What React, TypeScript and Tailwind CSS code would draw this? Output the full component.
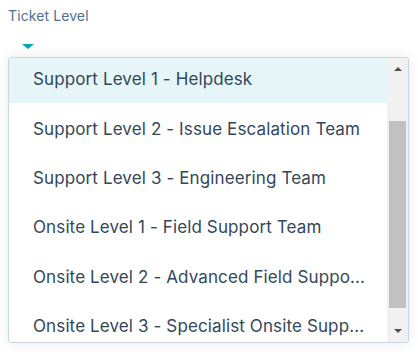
const levels = [
    'Support Level 1 - Helpdesk',
    'Support Level 2 - Issue Escalation Team',
    'Support Level 3 - Engineering Team',
    'Onsite Level 1 - Field Support Team',
    'Onsite Level 2 - Advanced Field Suppo...',
    'Onsite Level 3 - Specialist Onsite Supp...',
];

export default function App() {
    return (
        <div className="bg-white min-h-[355px] pt-[6px] pl-[8px] pr-[9px] font-['Inter',sans-serif]">
            <div className="text-[14px] leading-[20px] text-[#516f90] tracking-[0.1px]">Ticket Level</div>
            <div className="mt-[18px] ml-[14px] w-0 h-0 border-l-[6px] border-r-[6px] border-t-[5px] border-l-transparent border-r-transparent border-t-[#00a4bd]" />
            <div className="mt-[8px] h-[286px] border border-[#cbd6e2] rounded-[3px] bg-white shadow-[0_0_12px_rgba(45,62,80,0.10)] overflow-hidden flex">
                <ul className="flex-1 min-w-0">
                    {levels.map((level, i) => (
                        <li
                            key={level}
                            className={
                                i === 0
                                    ? 'h-[45px] pb-[3px] flex items-center pl-[24px] bg-[#e5f5f8] text-[17px] leading-[20px] tracking-[0.12px] text-[#33475b] whitespace-nowrap'
                                    : 'h-[49.4px] pt-[2px] flex items-center pl-[24px] text-[17px] leading-[20px] tracking-[0.12px] text-[#33475b] whitespace-nowrap'
                            }
                        >
                            {level}
                        </li>
                    ))}
                </ul>
                <div className="w-[21px] bg-[#f1f1f1] flex flex-col items-center">
                    <div className="h-[22px] flex items-center justify-center">
                        <div className="w-0 h-0 border-l-[4px] border-r-[4px] border-b-[4px] border-l-transparent border-r-transparent border-b-[#505050]" />
                    </div>
                    <div className="mt-[41px] h-[187px] w-[17px] bg-[#c1c1c1]" />
                    <div className="flex-1" />
                    <div className="h-[22px] flex items-center justify-center">
                        <div className="w-0 h-0 border-l-[4px] border-r-[4px] border-t-[4px] border-l-transparent border-r-transparent border-t-[#505050]" />
                    </div>
                </div>
            </div>
        </div>
    );
}
